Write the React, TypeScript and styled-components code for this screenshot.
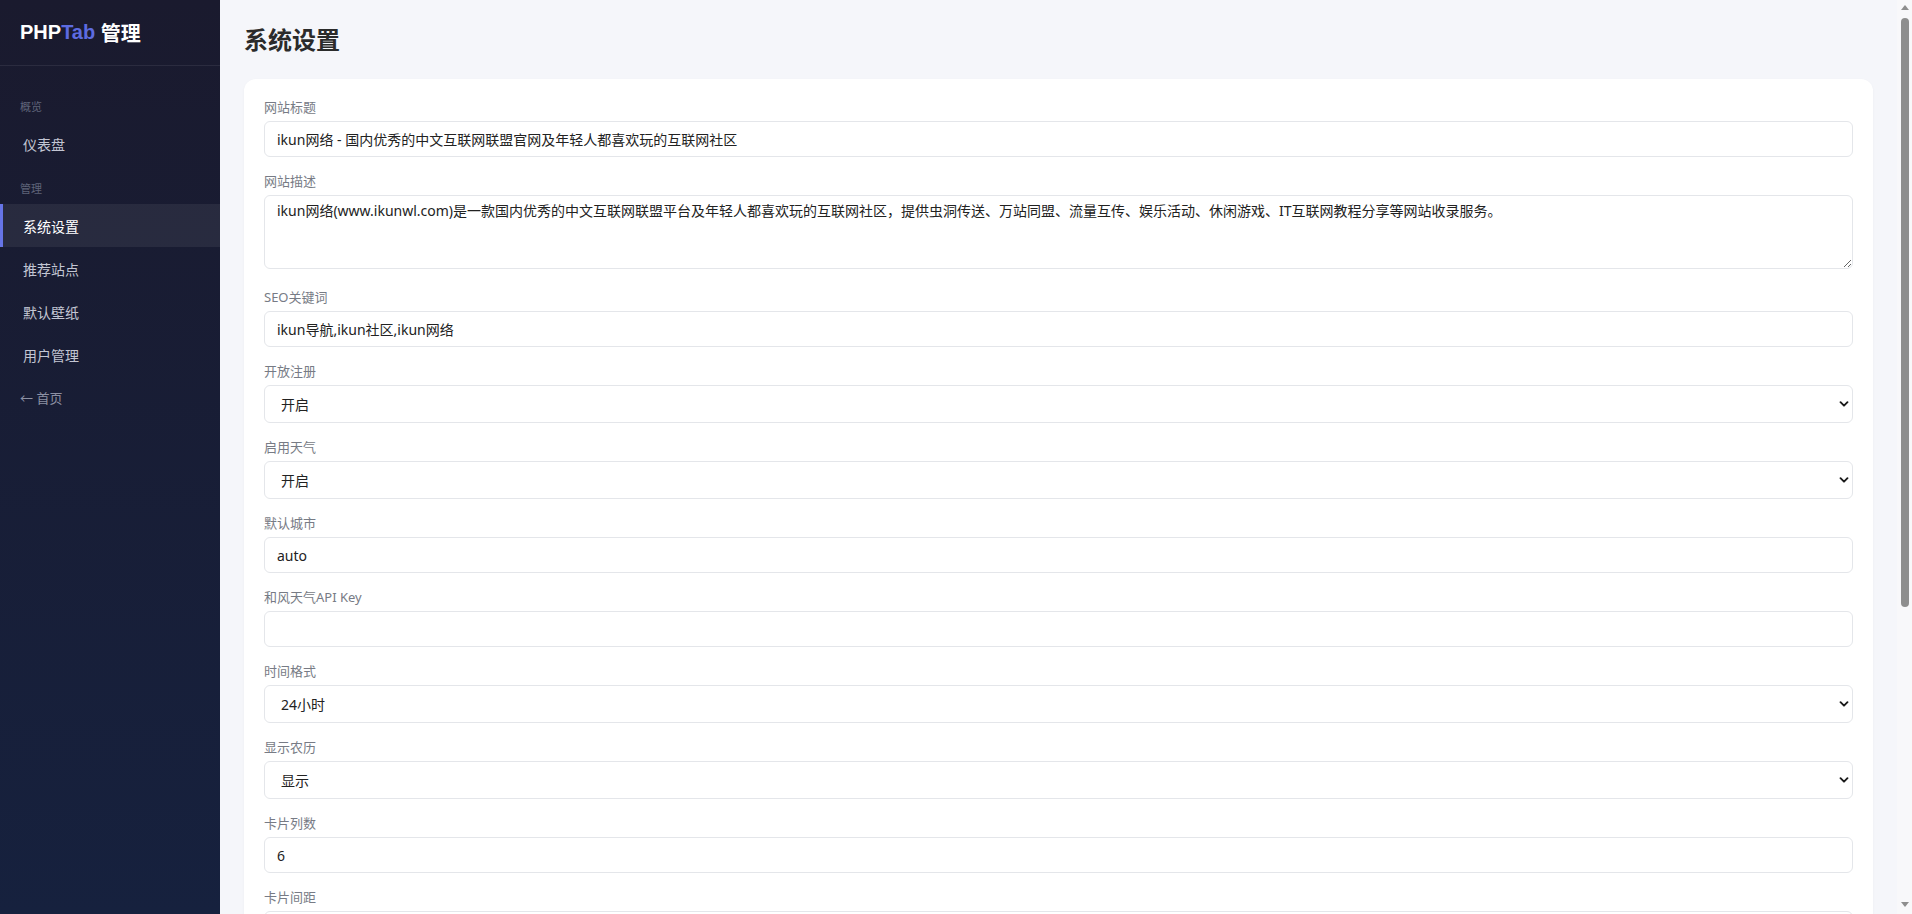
import React from "react";
import styled, { createGlobalStyle } from "styled-components";

const GlobalStyle = createGlobalStyle`
  * { box-sizing: border-box; }
  html, body { margin: 0; padding: 0; height: 100%; overflow: hidden; }
  body {
    background: #f5f6fa;
    font-family: "Noto Sans", "Noto Sans CJK SC", sans-serif;
    color: #222;
  }
`;

const Shell = styled.div`
  display: flex;
  height: 100vh;
  overflow: hidden;
`;

const Sidebar = styled.aside`
  width: 220px;
  flex-shrink: 0;
  height: 100vh;
  background: linear-gradient(180deg, #1a1a2e 0%, #16213e 100%);
  display: flex;
  flex-direction: column;
`;

const Logo = styled.div`
  height: 66px;
  padding: 0 20px;
  display: flex;
  align-items: center;
  border-bottom: 1px solid rgba(255, 255, 255, 0.08);
  font-family: "Liberation Sans", "Noto Sans CJK SC", sans-serif;
  font-size: 20px;
  font-weight: 700;
  color: #ffffff;
`;

const LogoAccent = styled.span`
  color: #5d6be0;
`;

const Nav = styled.nav`
  display: flex;
  flex-direction: column;
  padding-top: 17px;
`;

const SectionLabel = styled.div`
  padding: 0 20px;
  margin-top: 16px;
  margin-bottom: 7px;
  font-size: 11px;
  line-height: 16px;
  color: #5f6479;
`;

const NavItem = styled.a<{ $active?: boolean }>`
  height: 43px;
  display: flex;
  align-items: center;
  padding: 0 20px;
  border-left: 3px solid ${(p) => (p.$active ? "#6674e6" : "transparent")};
  background: ${(p) => (p.$active ? "rgba(255,255,255,0.065)" : "transparent")};
  color: ${(p) => (p.$active ? "#ffffff" : "#c3c6d3")};
  font-size: 14px;
  text-decoration: none;
  cursor: pointer;
`;

const HomeLink = styled.a`
  height: 43px;
  display: flex;
  align-items: center;
  padding: 0 20px;
  color: #8c90a3;
  font-size: 13px;
  text-decoration: none;
`;

const Main = styled.main`
  flex: 1;
  min-width: 0;
  height: 100vh;
  overflow: hidden;
  padding: 24px;
`;

const ScrollRail = styled.div`
  width: 15px;
  flex-shrink: 0;
  height: 100vh;
  background: #f8f8fa;
  display: flex;
  flex-direction: column;
  align-items: center;
  padding: 5px 0 7px;
`;

const ArrowUp = styled.div`
  width: 0;
  height: 0;
  border-left: 4px solid transparent;
  border-right: 4px solid transparent;
  border-bottom: 5px solid #8e8e8e;
  margin-bottom: 8px;
`;

const ArrowDown = styled.div`
  width: 0;
  height: 0;
  border-left: 4px solid transparent;
  border-right: 4px solid transparent;
  border-top: 5px solid #8e8e8e;
  margin-top: auto;
`;

const Thumb = styled.div`
  width: 8px;
  border-radius: 4px;
  background: #8e8e8e;
`;

const Title = styled.h1`
  margin: 0 0 23px;
  font-size: 24px;
  line-height: 32px;
  font-weight: 700;
  color: #2b2b2b;
`;

const Card = styled.section`
  background: #ffffff;
  border-radius: 12px;
  box-shadow: 0 1px 3px rgba(0, 0, 0, 0.04);
  padding: 19px 20px 20px;
`;

const Field = styled.div<{ $tall?: boolean }>`
  margin-bottom: ${(p) => (p.$tall ? "19px" : "15px")};
`;

const Label = styled.label`
  display: block;
  font-size: 13px;
  line-height: 18px;
  color: #777b85;
  margin-bottom: 5px;
`;

const TextInput = styled.input`
  display: block;
  width: 100%;
  height: 36px;
  padding: 0 12px;
  border: 1px solid #e4e6ea;
  border-radius: 6px;
  background: #fff;
  font-family: inherit;
  font-size: 14px;
  color: #222;
  outline: none;
`;

const TextArea = styled.textarea`
  display: block;
  width: 100%;
  height: 74px;
  padding: 6px 12px;
  border: 1px solid #e4e6ea;
  border-radius: 6px;
  background: #fff;
  font-family: inherit;
  font-size: 14px;
  line-height: 18px;
  color: #222;
  resize: vertical;
  outline: none;
`;

const SelectWrap = styled.div`
  position: relative;
`;

const Select = styled.select`
  display: block;
  width: 100%;
  height: 38px;
  padding: 0 16px;
  border: 1px solid #e4e6ea;
  border-radius: 6px;
  background: #fff;
  font-family: inherit;
  font-size: 14px;
  color: #222;
  appearance: none;
  -webkit-appearance: none;
  outline: none;
`;

const Chevron = styled.svg`
  position: absolute;
  right: 4px;
  top: 50%;
  width: 10px;
  height: 10px;
  transform: translateY(-50%);
  pointer-events: none;
`;

const SaveButton = styled.button`
  height: 38px;
  padding: 0 24px;
  border: none;
  border-radius: 6px;
  background: #5d6be0;
  color: #fff;
  font-family: inherit;
  font-size: 14px;
  cursor: pointer;
`;

type FieldDef =
  | { kind: "input"; label: string; value: string }
  | { kind: "textarea"; label: string; value: string }
  | { kind: "select"; label: string; value: string; options: string[] };

const fields: FieldDef[] = [
  { kind: "input", label: "网站标题", value: "ikun网络 - 国内优秀的中文互联网联盟官网及年轻人都喜欢玩的互联网社区" },
  {
    kind: "textarea",
    label: "网站描述",
    value:
      "ikun网络(www.ikunwl.com)是一款国内优秀的中文互联网联盟平台及年轻人都喜欢玩的互联网社区，提供虫洞传送、万站同盟、流量互传、娱乐活动、休闲游戏、IT互联网教程分享等网站收录服务。",
  },
  { kind: "input", label: "SEO关键词", value: "ikun导航,ikun社区,ikun网络" },
  { kind: "select", label: "开放注册", value: "开启", options: ["开启", "关闭"] },
  { kind: "select", label: "启用天气", value: "开启", options: ["开启", "关闭"] },
  { kind: "input", label: "默认城市", value: "auto" },
  { kind: "input", label: "和风天气API Key", value: "" },
  { kind: "select", label: "时间格式", value: "24小时", options: ["24小时", "12小时"] },
  { kind: "select", label: "显示农历", value: "显示", options: ["显示", "隐藏"] },
  { kind: "input", label: "卡片列数", value: "6" },
  { kind: "input", label: "卡片间距", value: "16" },
  { kind: "input", label: "卡片圆角", value: "12" },
  { kind: "input", label: "页脚版权", value: "© ikun网络" },
  { kind: "input", label: "ICP备案号", value: "" },
  { kind: "textarea", label: "统计代码", value: "" },
];

const ChevronIcon = () => (
  <Chevron viewBox="0 0 10 10">
    <path d="M1.5 3.2 L5 6.7 L8.5 3.2" fill="none" stroke="#1a1a1a" strokeWidth="1.9" strokeLinecap="round" strokeLinejoin="round" />
  </Chevron>
);

const renderField = (f: FieldDef, i: number) => {
  const id = `f${i}`;
  return (
    <Field key={id} $tall={f.kind === "textarea"}>
      <Label htmlFor={id}>{f.label}</Label>
      {f.kind === "input" && <TextInput id={id} defaultValue={f.value} />}
      {f.kind === "textarea" && <TextArea id={id} defaultValue={f.value} />}
      {f.kind === "select" && (
        <SelectWrap>
          <Select id={id} defaultValue={f.value}>
            {f.options.map((o) => (
              <option key={o} value={o}>
                {o}
              </option>
            ))}
          </Select>
          <ChevronIcon />
        </SelectWrap>
      )}
    </Field>
  );
};

const viewportShare = 0.666;

export default function App() {
  return (
    <>
      <GlobalStyle />
      <Shell>
        <Sidebar>
          <Logo>
            PHP<LogoAccent>Tab</LogoAccent>&nbsp;管理
          </Logo>
          <Nav>
            <SectionLabel>概览</SectionLabel>
            <NavItem>仪表盘</NavItem>
            <SectionLabel>管理</SectionLabel>
            <NavItem $active>系统设置</NavItem>
            <NavItem>推荐站点</NavItem>
            <NavItem>默认壁纸</NavItem>
            <NavItem>用户管理</NavItem>
            <HomeLink>← 首页</HomeLink>
          </Nav>
        </Sidebar>
        <Main>
          <Title>系统设置</Title>
          <Card>
            {fields.map(renderField)}
            <SaveButton>保存设置</SaveButton>
          </Card>
        </Main>
        <ScrollRail>
          <ArrowUp />
          <Thumb style={{ height: `${Math.round(884 * viewportShare)}px` }} />
          <ArrowDown />
        </ScrollRail>
      </Shell>
    </>
  );
}
